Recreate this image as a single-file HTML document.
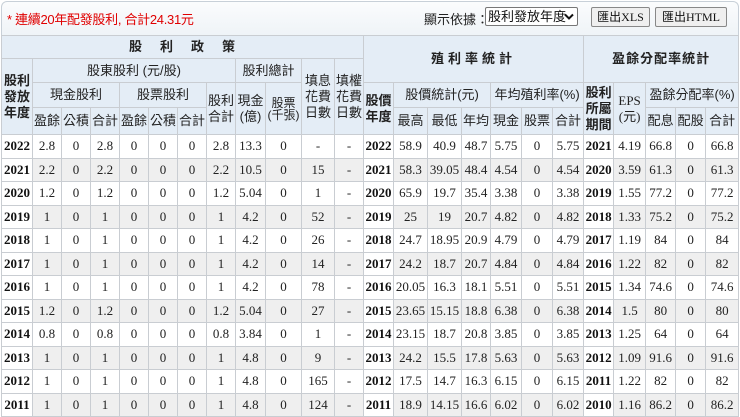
<!DOCTYPE html>
<html><head><meta charset="utf-8"><style>
*{margin:0;padding:0;box-sizing:border-box}
body{width:740px;height:416px;overflow:hidden;background:#fff;font-family:"Liberation Serif","Noto Serif CJK SC",serif;}
.bar{position:absolute;left:1px;top:1px;width:738px;height:36px;border:1px solid #c8d0d8;border-bottom:none;border-radius:6px 6px 0 0;background:linear-gradient(#fbfcfd,#eef3f7);}
.note{position:absolute;left:7px;top:9px;color:#e00000;font-size:13px;font-family:"Liberation Sans","Noto Sans CJK TC",sans-serif;letter-spacing:-0.3px}
.lbl{position:absolute;left:424px;top:9px;font-size:13px;font-family:"Liberation Sans","Noto Sans CJK TC",sans-serif;color:#222}
.sel{position:absolute;left:485px;top:7px;width:93px;height:19px;border:1px solid #777;border-radius:2px;background:#fff;font-size:13px;font-family:"Liberation Sans","Noto Sans CJK TC",sans-serif;padding-left:2px;line-height:17px;color:#111}
.sel svg{position:absolute;right:3px;top:5px}
.btn{position:absolute;top:7px;height:20px;border:1px solid #888;border-radius:2px;background:#efefef;font-size:12px;line-height:18px;text-align:center;font-family:"Liberation Serif","Noto Sans CJK TC",serif;color:#111}
table{position:absolute;left:1px;top:35px;width:738px;border-collapse:collapse;table-layout:fixed;}
td,th{border:1px solid #c9cdd2;text-align:center;font-size:13px;padding:0;overflow:hidden;white-space:nowrap}
thead th{background:#e4edf6;font-weight:normal;font-family:"Liberation Sans","Noto Sans CJK TC",sans-serif;color:#222;line-height:16px}
thead th.b{font-weight:bold;letter-spacing:1px}
.sp{letter-spacing:18px}
tbody td{height:23.5px;color:#222}
tbody tr:nth-child(even) td{background:#efefef}
tbody td.y{font-weight:bold;background:#fff!important;color:#111}
</style></head><body>
<div class="bar"></div>
<div class="note">* 連續20年配發股利, 合計24.31元</div>
<div class="lbl">顯示依據：</div>
<div class="sel">股利發放年度<svg width="10" height="8" viewBox="0 0 10 8"><path d="M1 1.5 L5 5.5 L9 1.5" stroke="#111" stroke-width="2" fill="none"/></svg></div>
<div class="btn" style="left:591px;width:59px">匯出XLS</div>
<div class="btn" style="left:655px;width:72px">匯出HTML</div>
<table>
<colgroup>
<col style="width:31px"><col style="width:29px"><col style="width:29px"><col style="width:29px"><col style="width:29px"><col style="width:29px"><col style="width:29px"><col style="width:29px"><col style="width:30px"><col style="width:36px"><col style="width:33px"><col style="width:29px">
<col style="width:30px"><col style="width:34px"><col style="width:34px"><col style="width:29px"><col style="width:31px"><col style="width:31px"><col style="width:31px"><col style="width:30px"><col style="width:32px"><col style="width:30px"><col style="width:30px"><col style="width:33px">
</colgroup>
<thead>
<tr style="height:23px"><th colspan="12" class="b"><span class="sp">股利政</span>策</th><th colspan="7" rowspan="2" class="b" style="letter-spacing:4px">殖利率統計</th><th colspan="5" rowspan="2" class="b">盈餘分配率統計</th></tr>
<tr style="height:24px"><th rowspan="3" class="b" style="letter-spacing:0">股利<br>發放<br>年度</th><th colspan="7">股東股利 (元/股)</th><th colspan="2">股利總計</th><th rowspan="3">填息<br>花費<br>日數</th><th rowspan="3">填權<br>花費<br>日數</th></tr>
<tr style="height:25px"><th colspan="3">現金股利</th><th colspan="3">股票股利</th><th rowspan="2">股利<br>合計</th><th rowspan="2">現金<br>(億)</th><th rowspan="2" style="font-size:12px;line-height:12px">股票<br>(千張)</th><th rowspan="2" class="b" style="letter-spacing:0">股價<br>年度</th><th colspan="3">股價統計(元)</th><th colspan="3">年均殖利率(%)</th><th rowspan="2" class="b" style="letter-spacing:0">股利<br>所屬<br>期間</th><th rowspan="2" style="font-family:'Liberation Serif',serif">EPS<br>(元)</th><th colspan="3">盈餘分配率(%)</th></tr>
<tr style="height:27px"><th>盈餘</th><th>公積</th><th>合計</th><th>盈餘</th><th>公積</th><th>合計</th><th>最高</th><th>最低</th><th>年均</th><th>現金</th><th>股票</th><th>合計</th><th>配息</th><th>配股</th><th>合計</th></tr>
</thead>
<tbody>
<tr><td class="y">2022</td><td>2.8</td><td>0</td><td>2.8</td><td>0</td><td>0</td><td>0</td><td>2.8</td><td>13.3</td><td>0</td><td>-</td><td>-</td><td class="y">2022</td><td>58.9</td><td>40.9</td><td>48.7</td><td>5.75</td><td>0</td><td>5.75</td><td class="y">2021</td><td>4.19</td><td>66.8</td><td>0</td><td>66.8</td></tr>
<tr><td class="y">2021</td><td>2.2</td><td>0</td><td>2.2</td><td>0</td><td>0</td><td>0</td><td>2.2</td><td>10.5</td><td>0</td><td>15</td><td>-</td><td class="y">2021</td><td>58.3</td><td>39.05</td><td>48.4</td><td>4.54</td><td>0</td><td>4.54</td><td class="y">2020</td><td>3.59</td><td>61.3</td><td>0</td><td>61.3</td></tr>
<tr><td class="y">2020</td><td>1.2</td><td>0</td><td>1.2</td><td>0</td><td>0</td><td>0</td><td>1.2</td><td>5.04</td><td>0</td><td>1</td><td>-</td><td class="y">2020</td><td>65.9</td><td>19.7</td><td>35.4</td><td>3.38</td><td>0</td><td>3.38</td><td class="y">2019</td><td>1.55</td><td>77.2</td><td>0</td><td>77.2</td></tr>
<tr><td class="y">2019</td><td>1</td><td>0</td><td>1</td><td>0</td><td>0</td><td>0</td><td>1</td><td>4.2</td><td>0</td><td>52</td><td>-</td><td class="y">2019</td><td>25</td><td>19</td><td>20.7</td><td>4.82</td><td>0</td><td>4.82</td><td class="y">2018</td><td>1.33</td><td>75.2</td><td>0</td><td>75.2</td></tr>
<tr><td class="y">2018</td><td>1</td><td>0</td><td>1</td><td>0</td><td>0</td><td>0</td><td>1</td><td>4.2</td><td>0</td><td>26</td><td>-</td><td class="y">2018</td><td>24.7</td><td>18.95</td><td>20.9</td><td>4.79</td><td>0</td><td>4.79</td><td class="y">2017</td><td>1.19</td><td>84</td><td>0</td><td>84</td></tr>
<tr><td class="y">2017</td><td>1</td><td>0</td><td>1</td><td>0</td><td>0</td><td>0</td><td>1</td><td>4.2</td><td>0</td><td>14</td><td>-</td><td class="y">2017</td><td>24.2</td><td>18.7</td><td>20.7</td><td>4.84</td><td>0</td><td>4.84</td><td class="y">2016</td><td>1.22</td><td>82</td><td>0</td><td>82</td></tr>
<tr><td class="y">2016</td><td>1</td><td>0</td><td>1</td><td>0</td><td>0</td><td>0</td><td>1</td><td>4.2</td><td>0</td><td>78</td><td>-</td><td class="y">2016</td><td>20.05</td><td>16.3</td><td>18.1</td><td>5.51</td><td>0</td><td>5.51</td><td class="y">2015</td><td>1.34</td><td>74.6</td><td>0</td><td>74.6</td></tr>
<tr><td class="y">2015</td><td>1.2</td><td>0</td><td>1.2</td><td>0</td><td>0</td><td>0</td><td>1.2</td><td>5.04</td><td>0</td><td>27</td><td>-</td><td class="y">2015</td><td>23.65</td><td>15.15</td><td>18.8</td><td>6.38</td><td>0</td><td>6.38</td><td class="y">2014</td><td>1.5</td><td>80</td><td>0</td><td>80</td></tr>
<tr><td class="y">2014</td><td>0.8</td><td>0</td><td>0.8</td><td>0</td><td>0</td><td>0</td><td>0.8</td><td>3.84</td><td>0</td><td>1</td><td>-</td><td class="y">2014</td><td>23.15</td><td>18.7</td><td>20.8</td><td>3.85</td><td>0</td><td>3.85</td><td class="y">2013</td><td>1.25</td><td>64</td><td>0</td><td>64</td></tr>
<tr><td class="y">2013</td><td>1</td><td>0</td><td>1</td><td>0</td><td>0</td><td>0</td><td>1</td><td>4.8</td><td>0</td><td>9</td><td>-</td><td class="y">2013</td><td>24.2</td><td>15.5</td><td>17.8</td><td>5.63</td><td>0</td><td>5.63</td><td class="y">2012</td><td>1.09</td><td>91.6</td><td>0</td><td>91.6</td></tr>
<tr><td class="y">2012</td><td>1</td><td>0</td><td>1</td><td>0</td><td>0</td><td>0</td><td>1</td><td>4.8</td><td>0</td><td>165</td><td>-</td><td class="y">2012</td><td>17.5</td><td>14.7</td><td>16.3</td><td>6.15</td><td>0</td><td>6.15</td><td class="y">2011</td><td>1.22</td><td>82</td><td>0</td><td>82</td></tr>
<tr><td class="y">2011</td><td>1</td><td>0</td><td>1</td><td>0</td><td>0</td><td>0</td><td>1</td><td>4.8</td><td>0</td><td>124</td><td>-</td><td class="y">2011</td><td>18.9</td><td>14.15</td><td>16.6</td><td>6.02</td><td>0</td><td>6.02</td><td class="y">2010</td><td>1.16</td><td>86.2</td><td>0</td><td>86.2</td></tr>
</tbody>
</table>
</body></html>
